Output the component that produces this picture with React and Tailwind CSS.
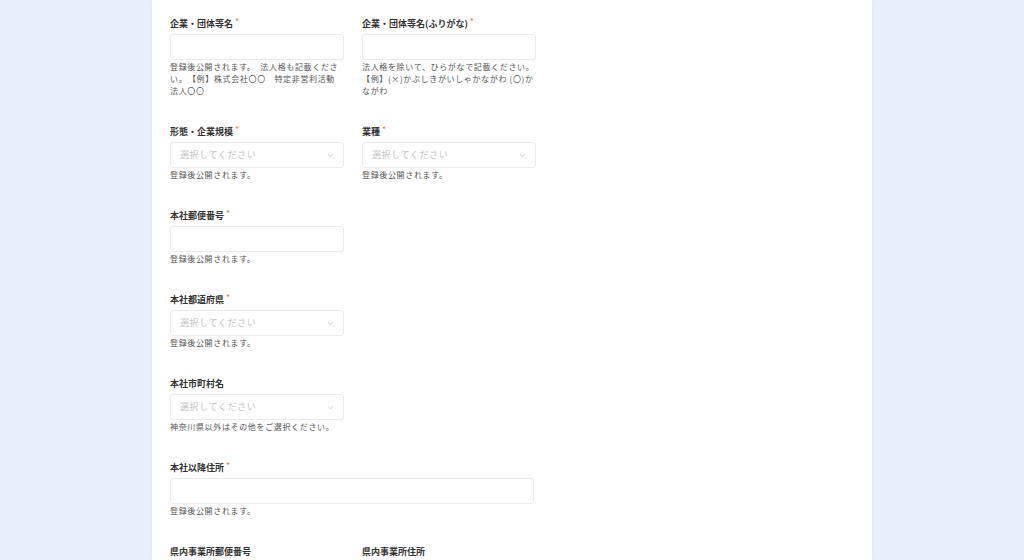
import { ChevronDown } from 'lucide-react'

function Label({ text, required }) {
  return (
    <div className="flex items-start h-[14px] mb-[3px]">
      <span className="text-[9px] font-bold text-[#333] leading-[14px]">{text}</span>
      {required && <span className="text-[9px] text-[#e5844c] leading-[10px] ml-[2px]">*</span>}
    </div>
  )
}

function Help({ children }) {
  return <p className="text-[8px] leading-[12px] tracking-[0.65px] text-[#555] mt-[1px]">{children}</p>
}

function TextInput() {
  return <div className="h-[26px] rounded-[3px] border border-[#ececec] bg-white" />
}

function Select() {
  return (
    <div className="h-[26px] rounded-[3px] border border-[#ececec] bg-white flex items-center justify-between pl-[9px] pr-[8px]">
      <span className="text-[9px] tracking-[0.6px] text-[#c4c4c4]">選択してください</span>
      <ChevronDown size={9} strokeWidth={1.5} className="text-[#b8b8b8]" />
    </div>
  )
}

function Field({ label, required, children, help }) {
  return (
    <div>
      <Label text={label} required={required} />
      {children}
      {help && <Help>{help}</Help>}
    </div>
  )
}

export default function App() {
  return (
    <div
      className="w-[1024px] h-[560px] overflow-hidden bg-[#e8eefc] flex"
      style={{ fontFamily: '"Noto Sans CJK JP", "Noto Sans", sans-serif' }}
    >
      <div className="ml-[152px] w-[720px] h-full bg-white shadow-[0_0_4px_rgba(0,0,0,0.06)] pl-[18px] pt-[17px]">
        <div className="w-[366px] flex flex-col gap-[28px]">
          <div className="grid grid-cols-[174px_174px] gap-x-[18px]">
            <Field
              label="企業・団体等名"
              required
              help={<>登録後公開されます。　法人格も記載ください。　【例】株式会社〇〇　特定非営利活動<br />法人〇〇</>}
            >
              <TextInput />
            </Field>
            <Field label="企業・団体等名(ふりがな)" required help="法人格を除いて、ひらがなで記載ください。【例】(×)かぶしきがいしゃかながわ (〇)かながわ">
              <TextInput />
            </Field>
          </div>
          <div className="grid grid-cols-[174px_174px] gap-x-[18px]">
            <Field label="形態・企業規模" required help="登録後公開されます。">
              <Select />
            </Field>
            <Field label="業種" required help="登録後公開されます。">
              <Select />
            </Field>
          </div>
          <div className="w-[174px]">
            <Field label="本社郵便番号" required help="登録後公開されます。">
              <TextInput />
            </Field>
          </div>
          <div className="w-[174px]">
            <Field label="本社都道府県" required help="登録後公開されます。">
              <Select />
            </Field>
          </div>
          <div className="w-[174px]">
            <Field label="本社市町村名" help="神奈川県以外はその他をご選択ください。">
              <Select />
            </Field>
          </div>
          <div className="w-[364px]">
            <Field label="本社以降住所" required help="登録後公開されます。">
              <TextInput />
            </Field>
          </div>
          <div className="grid grid-cols-[174px_174px] gap-x-[18px]">
            <Field label="県内事業所郵便番号">
              <TextInput />
            </Field>
            <Field label="県内事業所住所">
              <TextInput />
            </Field>
          </div>
        </div>
      </div>
    </div>
  )
}
